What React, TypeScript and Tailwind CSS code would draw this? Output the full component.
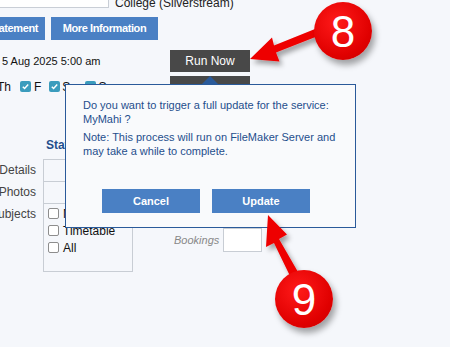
import React from 'react';

function Check({ on }: { on?: boolean }) {
  if (on) {
    return (
      <span className="inline-flex w-[11px] h-[11px] items-center justify-center rounded-[2px] bg-[#3b9cbd]">
        <svg viewBox="0 0 10 10" className="w-[9px] h-[9px]">
          <path d="M2 5.2l2 2 4-4.4" fill="none" stroke="white" strokeWidth={1.6} />
        </svg>
      </span>
    );
  }
  return <span className="inline-block w-[11px] h-[11px] rounded-[2px] border border-[#8d8d8d] bg-white" />;
}

function Badge({ n }: { n: string }) {
  return (
    <div className="w-[58px] h-[58px] rounded-full bg-[radial-gradient(circle_at_40%_35%,#ff1a1a,#e00000_65%,#c40000)] shadow-[3px_5px_6px_rgba(0,0,0,0.35)] flex items-center justify-center">
      <span className="text-white text-[44px] leading-none font-['Liberation_Sans',sans-serif] mt-[2px]">{n}</span>
    </div>
  );
}

export default function App() {
  return (
    <div className="relative w-[450px] h-[347px] overflow-hidden bg-[#f5f7fb] font-['Liberation_Sans',sans-serif] text-[12px] text-[#222]">
      {/* top strip */}
      <div className="flex items-start h-[11px] overflow-hidden">
        <div className="w-[109px] h-[8px] bg-white border-r border-b border-[#c9ced6]" />
        <span className="ml-[6px] -mt-[3px] text-[12px] leading-[12px] text-[#222] whitespace-nowrap">College (Silverstream)</span>
      </div>

      {/* button row */}
      <div className="flex gap-[6px] mt-[6px] h-[23px]">
        <div className="w-[45px] overflow-hidden bg-[#4a80c4] flex items-center justify-end pr-[7px]">
          <span className="text-white font-bold text-[11px] tracking-[-0.4px] whitespace-nowrap">Statement</span>
        </div>
        <div className="w-[107px] bg-[#4a80c4] flex items-center justify-center">
          <span className="text-white font-bold text-[11px] tracking-[-0.4px] whitespace-nowrap">More Information</span>
        </div>
      </div>

      {/* date + run now */}
      <div className="flex items-start mt-[10px]">
        <div className="w-[170px] pl-[2px] pt-[3px] text-[11px] text-[#111] whitespace-nowrap">5 Aug 2025 5:00 am</div>
        <div className="w-[80px] h-[22px] bg-[#484848] flex items-center justify-center text-white text-[12px]">Run Now</div>
      </div>

      {/* days row */}
      <div className="flex items-center mt-[7px] h-[15px] relative">
        <div className="flex items-center -ml-[3px] text-[12px] text-[#111]">
          <span>Th</span>
          <span className="ml-[9px]"><Check on /></span>
          <span className="ml-[3px]">F</span>
          <span className="ml-[8px]"><Check on /></span>
          <span className="ml-[2px]">S</span>
          <span className="ml-[15px]"><Check on /></span>
          <span className="ml-[2px]">S</span>
        </div>
        <div className="absolute left-[170px] -top-[3px] w-[80px] h-[10px] bg-[#484848]" />
      </div>

      {/* status section */}
      <div className="mt-[42px] pl-[46px] font-bold text-[12px] text-[#1f4e8c]">Status</div>
      <div className="flex mt-[5px]">
        <div className="w-[43px] flex flex-col items-end pr-[7px] text-[12px] text-[#444]">
          <div className="h-[22px] flex items-center">Details</div>
          <div className="h-[22px] flex items-center">Photos</div>
          <div className="h-[22px] flex items-center">Subjects</div>
        </div>
        <div className="flex flex-col">
          <div className="w-[200px] h-[22px] border border-[#c8cdd4] border-b-0" />
          <div className="w-[200px] h-[22px] border border-[#c8cdd4] border-b-0" />
          <div className="flex items-start">
            <div className="w-[90px] h-[69px] border border-[#c8cdd4] flex flex-col gap-[6px] pl-[4px] pt-[4px] text-[12px] text-[#111]">
              <div className="flex items-center gap-[4px] h-[11px]"><Check /><span>MyMahi</span></div>
              <div className="flex items-center gap-[4px] h-[11px]"><Check /><span>Timetable</span></div>
              <div className="flex items-center gap-[4px] h-[11px]"><Check /><span>All</span></div>
            </div>
            <div className="flex items-center mt-[25px] ml-[41px]">
              <span className="italic text-[11px] text-[#888]">Bookings</span>
              <div className="ml-[4px] w-[39px] h-[24px] bg-white border border-[#c8cdd4]" />
            </div>
          </div>
        </div>
      </div>

      {/* dialog */}
      <div className="absolute left-[65px] top-[84px] w-[291px] h-[144px] bg-[#f9fafc] border border-[#2a5a9a] pl-[17px] pt-[13px] text-[11px] leading-[14px] text-[#1f4e8c]">
        <p>Do you want to trigger a full update for the service:<br />MyMahi ?</p>
        <p className="mt-[4px]">Note: This process will run on FileMaker Server and<br />may take a while to complete.</p>
        <div className="flex gap-[12px] mt-[31px] ml-[19px]">
          <div className="w-[98px] h-[24px] bg-[#4a80c4] flex items-center justify-center text-white font-bold text-[11px]">Cancel</div>
          <div className="w-[98px] h-[24px] bg-[#4a80c4] flex items-center justify-center text-white font-bold text-[11px]">Update</div>
        </div>
      </div>
      <svg className="absolute left-[201px] top-[76px]" width="18" height="9" viewBox="0 0 18 9">
        <path d="M9 0L18 9H0z" fill="#2a5a9a" />
      </svg>

      {/* annotation arrows */}
      <svg className="absolute left-0 top-0 pointer-events-none" width="450" height="347">
        <defs>
          <filter id="sh" x="-20%" y="-20%" width="150%" height="150%">
            <feDropShadow dx="3" dy="4" stdDeviation="2.5" floodColor="#000" floodOpacity="0.35" />
          </filter>
        </defs>
        <g filter="url(#sh)" fill="#ee0000">
          <path d="M318 36L276 52.5L279.5 61.5L250 59L272 37.5L274 45.5L315 29z" />
          <path d="M298 272L279 239L287 234.5L268 215L266 247L274 243L290 276z" />
        </g>
      </svg>

      <div className="absolute left-[314px] top-[2px]"><Badge n="8" /></div>
      <div className="absolute left-[275px] top-[270px]"><Badge n="9" /></div>
    </div>
  );
}
